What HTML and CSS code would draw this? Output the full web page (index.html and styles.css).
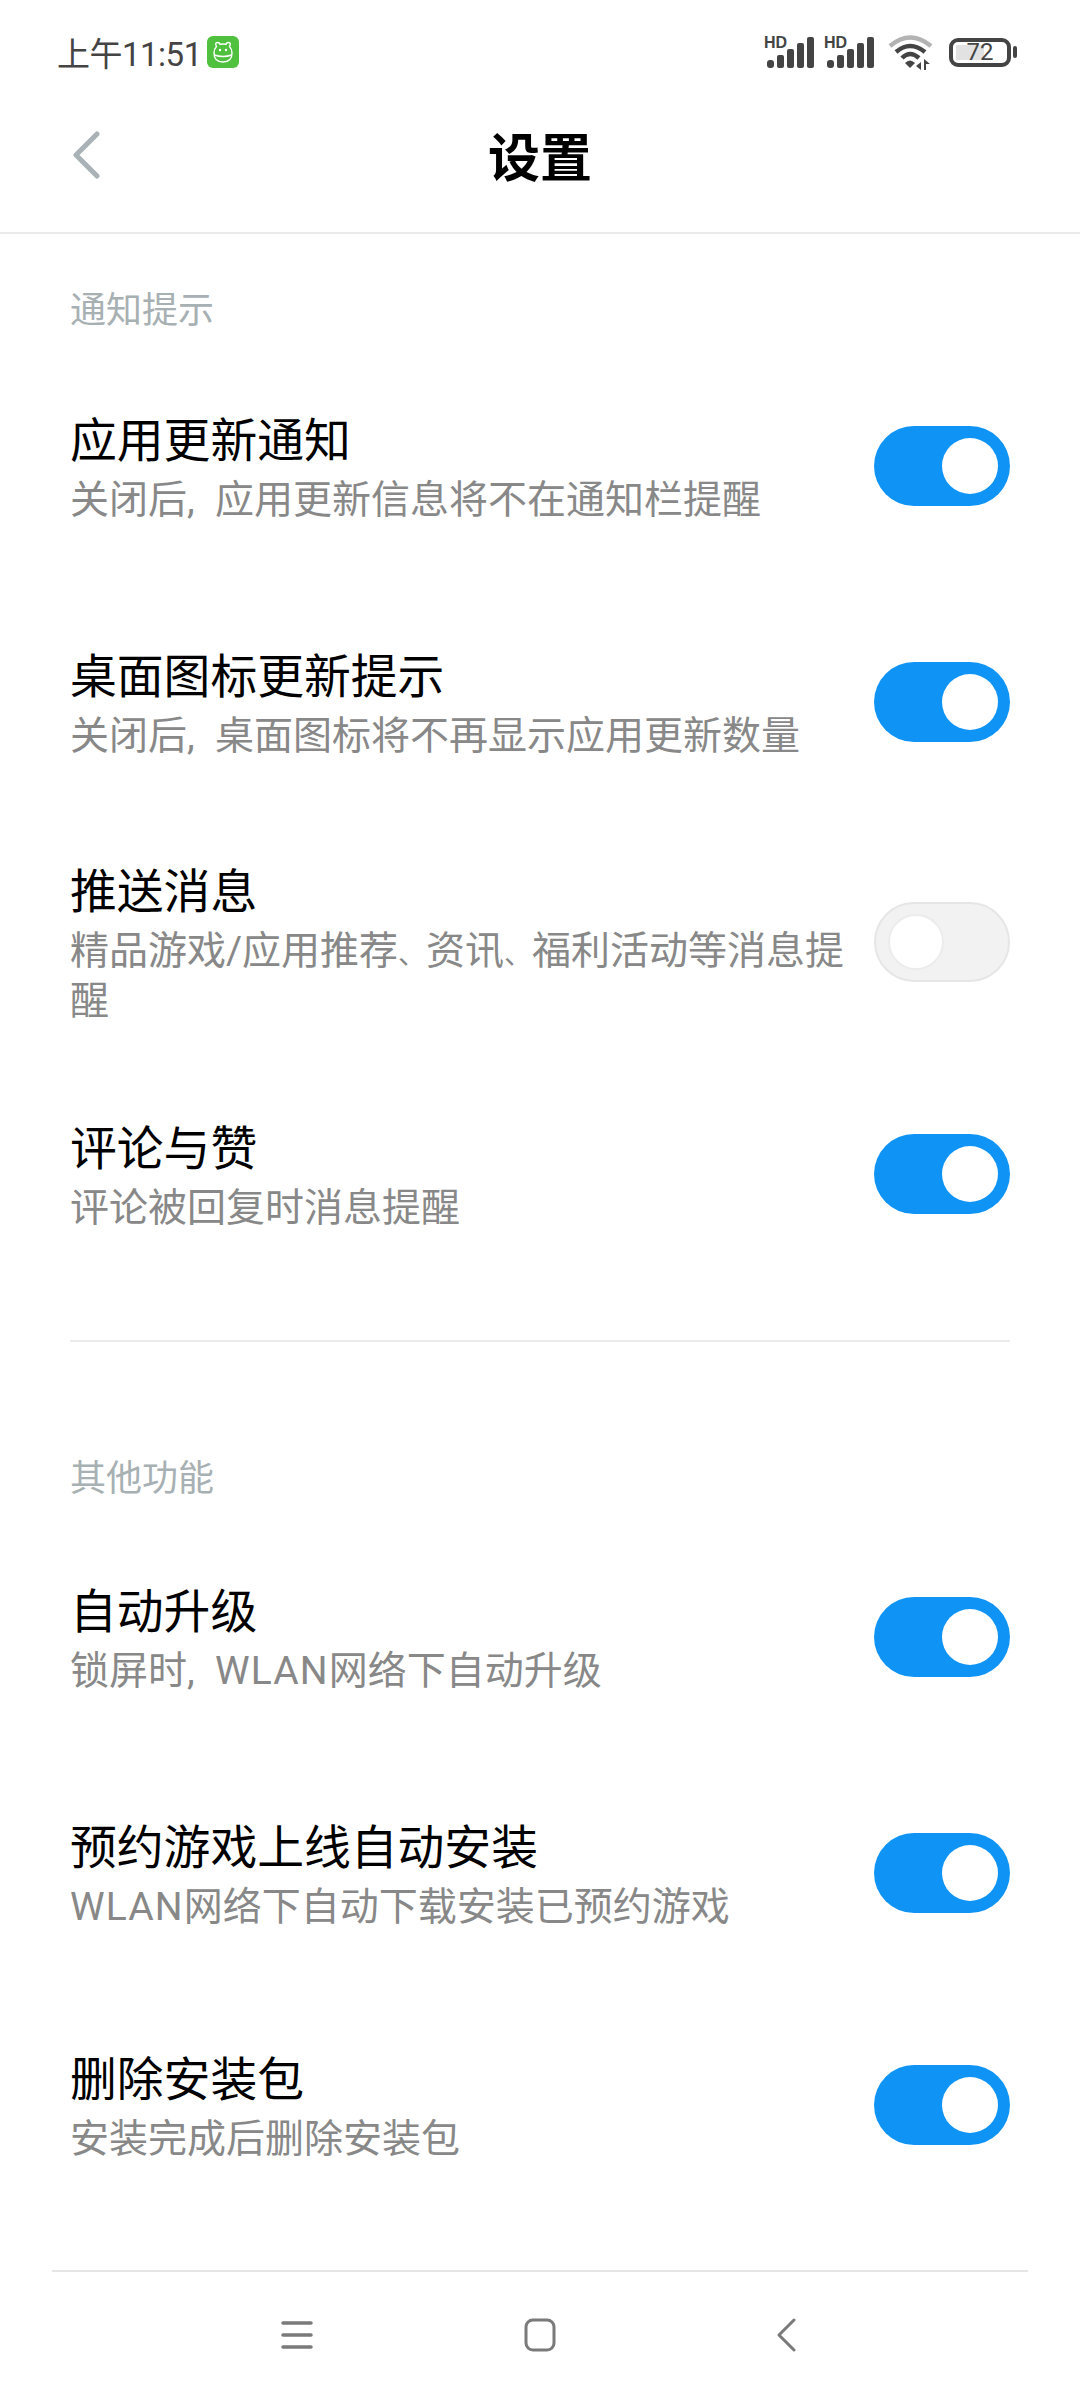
FILE: index.html
```html
<!DOCTYPE html>
<html lang="zh-CN">
<head>
    <meta charset="UTF-8">
    <meta name="viewport" content="width=device-width, initial-scale=1.0">
    <title>设置</title>
    <link rel="stylesheet" href="styles.css">
</head>
<body>
    <div class="screen">
        <div class="status-bar">
            <div class="status-left">
                <span class="clock">上午11:51</span>
                <svg class="app-badge" width="32" height="32" viewBox="0 0 32 32">
                    <rect width="32" height="32" rx="6" fill="#4fc13f"/>
                    <path d="M9.500 10.500 Q7.500 6.500 10.500 6.500 Q12.500 6.500 13 8.300 Q16 7.600 19 8.300 Q19.500 6.500 21.500 6.500 Q24.500 6.500 22.500 10.500 Q25 13 25 17 Q25 26 16 26 Q7 26 7 17 Q7 13 9.500 10.500 Z" fill="none" stroke="#fff" stroke-width="1.400"/>
                    <path d="M7.500 19 Q16 22 24.500 19" fill="none" stroke="#fff" stroke-width="1.400"/>
                    <circle cx="13" cy="14" r="1.200" fill="#fff"/>
                    <circle cx="19" cy="14" r="1.200" fill="#fff"/>
                </svg>
            </div>
            <div class="status-right">
                <svg class="signal" width="50" height="38" viewBox="0 -4 50 38">
                    <text class="signal-hd" x="0" y="14">HD</text>
                    <rect x="3" y="26" width="7" height="8" rx="3" fill="#444"/>
                    <rect x="13" y="21" width="7" height="13" rx="2" fill="#444"/>
                    <rect x="23" y="15" width="7" height="19" rx="2" fill="#444"/>
                    <rect x="33" y="9" width="7" height="25" rx="2" fill="#444"/>
                    <rect x="43" y="3" width="7" height="31" rx="2" fill="#444"/>
                </svg>
                <svg class="signal" width="50" height="38" viewBox="0 -4 50 38">
                    <text class="signal-hd" x="0" y="14">HD</text>
                    <rect x="3" y="26" width="7" height="8" rx="3" fill="#444"/>
                    <rect x="13" y="21" width="7" height="13" rx="2" fill="#444"/>
                    <rect x="23" y="15" width="7" height="19" rx="2" fill="#444"/>
                    <rect x="33" y="9" width="7" height="25" rx="2" fill="#444"/>
                    <rect x="43" y="3" width="7" height="31" rx="2" fill="#444"/>
                </svg>
                <svg class="wifi" width="48" height="36" viewBox="0 0 48 36">
                    <path d="M3 12 Q23 -5 44 12" fill="none" stroke="#b3b3b3" stroke-width="4.500"/>
                    <path d="M9 18 Q23 6 38 18" fill="none" stroke="#444" stroke-width="4.500"/>
                    <path d="M15 24 Q23 16 32 24" fill="none" stroke="#444" stroke-width="4.500"/>
                    <path d="M18 29 Q23 24 28 29 L23 34 Z" fill="#444"/>
                    <path d="M34 28 L34 36 L29 32 Z M37 25 L37 36 L39 36 L39 30 L43 30 Z" fill="#444"/>
                </svg>
                <div class="battery">
                    <div class="battery-body">
                        <span class="battery-fill"></span>
                        <span class="battery-level">72</span>
                    </div>
                    <span class="battery-nub"></span>
                </div>
            </div>
        </div>

        <div class="nav-bar">
            <svg class="back-icon" width="30" height="48" viewBox="0 0 30 48">
                <path d="M26 3 L5 24 L26 45" fill="none" stroke="#a9b2b6" stroke-width="5" stroke-linecap="round" stroke-linejoin="round"/>
            </svg>
            <h1>设置</h1>
        </div>

        <div class="content">
            <div class="section-title first">通知提示</div>

            <div class="row">
                <div class="row-text">
                    <div class="row-title">应用更新通知</div>
                    <div class="row-desc">关闭后<span class="comma">,</span>应用更新信息将不在通知栏提醒</div>
                </div>
                <div class="toggle on"><span class="knob"></span></div>
            </div>
            <div class="row">
                <div class="row-text">
                    <div class="row-title">桌面图标更新提示</div>
                    <div class="row-desc">关闭后<span class="comma">,</span>桌面图标将不再显示应用更新数量</div>
                </div>
                <div class="toggle on"><span class="knob"></span></div>
            </div>
            <div class="row row-tall">
                <div class="row-text">
                    <div class="row-title">推送消息</div>
                    <div class="row-desc">精品游戏/应用推荐<span class="dun">、</span>资讯<span class="dun">、</span>福利活动等消息提<br>醒</div>
                </div>
                <div class="toggle off"><span class="knob"></span></div>
            </div>
            <div class="row row-short">
                <div class="row-text">
                    <div class="row-title">评论与赞</div>
                    <div class="row-desc">评论被回复时消息提醒</div>
                </div>
                <div class="toggle on"><span class="knob"></span></div>
            </div>

            <div class="divider"></div>

            <div class="section-title second">其他功能</div>

            <div class="row">
                <div class="row-text">
                    <div class="row-title">自动升级</div>
                    <div class="row-desc">锁屏时<span class="comma">,</span><span class="latin">WLAN</span>网络下自动升级</div>
                </div>
                <div class="toggle on"><span class="knob"></span></div>
            </div>
            <div class="row">
                <div class="row-text">
                    <div class="row-title">预约游戏上线自动安装</div>
                    <div class="row-desc"><span class="latin">WLAN</span>网络下自动下载安装已预约游戏</div>
                </div>
                <div class="toggle on"><span class="knob"></span></div>
            </div>
            <div class="row row-last">
                <div class="row-text">
                    <div class="row-title">删除安装包</div>
                    <div class="row-desc">安装完成后删除安装包</div>
                </div>
                <div class="toggle on"><span class="knob"></span></div>
            </div>
        </div>

        <div class="system-bar">
            <svg width="40" height="34" viewBox="0 0 40 34">
                <path d="M6 5 H34 M6 17 H34 M6 29 H34" stroke="#7a7a7a" stroke-width="3.500" stroke-linecap="round"/>
            </svg>
            <svg width="40" height="34" viewBox="0 0 40 34">
                <rect x="5" y="2" width="28" height="30" rx="7" fill="none" stroke="#7a7a7a" stroke-width="3"/>
            </svg>
            <svg width="40" height="34" viewBox="0 0 40 34">
                <path d="M29 2 L14 17 L29 32" fill="none" stroke="#7a7a7a" stroke-width="3" stroke-linecap="round" stroke-linejoin="round"/>
            </svg>
        </div>
    </div>
</body>
</html>
```

FILE: styles.css
```css
* {
    margin: 0;
    padding: 0;
    box-sizing: border-box;
    font-family: 'Roboto', 'Noto Sans CJK SC', sans-serif;
}

body {
    width: 1080px;
    height: 2400px;
    background-color: white;
    overflow: hidden;
}

.screen {
    display: flex;
    flex-direction: column;
    height: 2400px;
}

/* status bar */
.status-bar {
    display: flex;
    justify-content: space-between;
    align-items: center;
    height: 104px;
    padding: 0 63px 0 57px;
}

.status-left {
    display: flex;
    align-items: center;
    gap: 5px;
}

.clock {
    font-size: 33px;
    color: #444;
    letter-spacing: -0.500px;
}

.status-right {
    display: flex;
    align-items: center;
}

.signal {
    margin: 0 10px 6px 0;
}

.signal-hd {
    font-family: 'Liberation Sans', sans-serif;
    font-size: 16px;
    font-weight: bold;
    fill: #444;
}

.wifi {
    margin: 0 14px 0 3px;
}

.battery {
    display: flex;
    align-items: center;
    gap: 2px;
}

.battery-body {
    position: relative;
    display: flex;
    align-items: center;
    justify-content: center;
    width: 62px;
    height: 29px;
    border: 4px solid #444;
    border-radius: 9px;
}

.battery-fill {
    position: absolute;
    left: 3px;
    top: 3px;
    bottom: 3px;
    width: 28px;
    background-color: #e2e2e2;
}

.battery-level {
    position: relative;
    font-size: 24px;
    line-height: 24px;
    color: #444;
}

.battery-nub {
    width: 4px;
    height: 12px;
    border-radius: 2px;
    background-color: #444;
}

/* title bar */
.nav-bar {
    position: relative;
    display: flex;
    align-items: center;
    justify-content: center;
    height: 130px;
    padding-bottom: 28px;
    border-bottom: 2px solid #ebebeb;
}

.back-icon {
    position: absolute;
    left: 71px;
    top: 27px;
}

.nav-bar h1 {
    font-size: 52px;
    font-weight: 700;
    color: #000;
}

/* settings list */
.content {
    flex: 1;
    padding: 0 70px;
}

.section-title {
    display: flex;
    align-items: center;
    font-size: 36px;
    color: #a7b0b2;
}

.section-title.first {
    height: 114px;
    padding-top: 31px;
}

.section-title.second {
    height: 177px;
    padding-top: 88px;
}

.row {
    display: flex;
    align-items: center;
    justify-content: space-between;
    height: 236px;
}

.row-tall {
    height: 244px;
}

.row-short {
    height: 220px;
}

.row-last {
    height: 228px;
}

.row-text {
    width: 780px;
    padding-top: 4px;
}

.row-title {
    font-size: 46.800px;
    line-height: 59px;
    margin-bottom: 4px;
    color: #000;
}

.row-desc {
    font-size: 39px;
    line-height: 50px;
    color: #888;
}

.comma {
    display: inline-block;
    width: 28px;
}

.dun {
    display: inline-block;
    width: 28px;
    font-size: 28px;
    line-height: 28px;
}

.latin {
    letter-spacing: 1.100px;
}

.divider {
    height: 2px;
    margin-top: 56px;
    background-color: #ebebeb;
}

.toggle {
    display: flex;
    align-items: center;
    flex: none;
    width: 136px;
    height: 80px;
    padding: 0 12px;
    border-radius: 40px;
}

.toggle.on {
    justify-content: flex-end;
    background-color: #0f94f5;
}

.toggle.off {
    background-color: #f2f2f2;
    border: 2px solid #e6e6e6;
}

.knob {
    width: 56px;
    height: 56px;
    border-radius: 50%;
    background-color: white;
}

.toggle.off .knob {
    border: 2px solid #ececec;
}

/* bottom navigation */
.system-bar {
    display: flex;
    align-items: center;
    gap: 204px;
    margin: 0 52px;
    height: 130px;
    padding: 0 0 2px 225px;
    border-top: 2px solid #e6e6e6;
}
```
